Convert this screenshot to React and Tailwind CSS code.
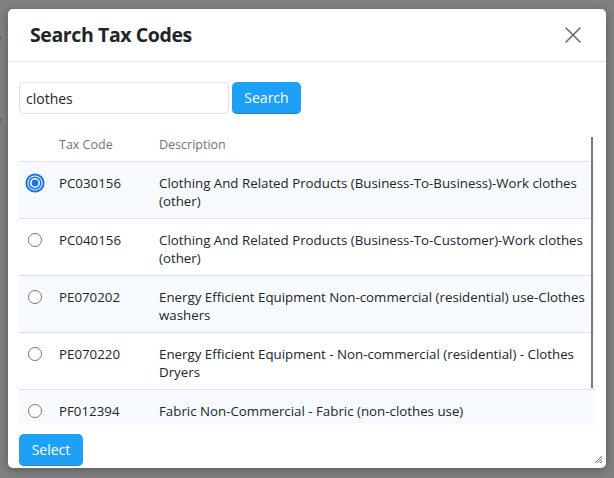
import { useState } from "react";

const rows = [
  { code: "PC030156", desc: "Clothing And Related Products (Business-To-Business)-Work clothes (other)" },
  { code: "PC040156", desc: "Clothing And Related Products (Business-To-Customer)-Work clothes (other)" },
  { code: "PE070202", desc: "Energy Efficient Equipment Non-commercial (residential) use-Clothes washers" },
  { code: "PE070220", desc: "Energy Efficient Equipment - Non-commercial (residential) - Clothes Dryers" },
  { code: "PF012394", desc: "Fabric Non-Commercial - Fabric (non-clothes use)" },
];

function Radio({ checked }) {
  return checked ? (
    <svg width="20" height="20" viewBox="0 0 20 20">
      <circle cx="10" cy="10" r="8.6" fill="none" stroke="#1a73e8" strokeWidth="2" />
      <circle cx="10" cy="10" r="5.8" fill="none" stroke="#1a73e8" strokeWidth="1.6" />
      <circle cx="10" cy="10" r="3.4" fill="#1a73e8" />
    </svg>
  ) : (
    <svg width="20" height="20" viewBox="0 0 20 20">
      <circle cx="10" cy="10" r="6.5" fill="#fff" stroke="#767676" strokeWidth="1" />
    </svg>
  );
}

export default function App() {
  const [query, setQuery] = useState("clothes");
  const [selected, setSelected] = useState("PC030156");

  return (
    <div className="relative w-[614px] h-[478px] overflow-hidden bg-[#808080] font-['Open_Sans',sans-serif]">
      {/* page behind the overlay */}
      <div className="absolute left-[-30px] top-[28px] text-[13px] text-[#3a3a3a]">Code</div>
      <div className="absolute left-[-30px] top-[110px] text-[13px] text-[#3a3a3a]">Code</div>

      <div className="absolute left-[8px] top-[9px] w-[598px] h-[459px] bg-white rounded-[5px] shadow-[0_2px_8px_rgba(0,0,0,0.3)] flex flex-col">
        <div className="h-[53px] shrink-0 flex items-center justify-between pl-[22px] pr-[24px] border-b border-[#dee2e6]">
          <h2 className="text-[19.5px] font-bold text-[#212529] tracking-[-0.4px]">Search Tax Codes</h2>
          <button className="text-[#6c6c6c]">
            <svg width="18" height="18" viewBox="0 0 18 18" stroke="currentColor" strokeWidth="1.6" strokeLinecap="round">
              <line x1="2" y1="2" x2="16" y2="16" />
              <line x1="16" y1="2" x2="2" y2="16" />
            </svg>
          </button>
        </div>

        <div className="flex-1 flex flex-col px-[11px] pt-5 min-h-0">
          <div className="flex gap-[3px]">
            <input
              value={query}
              onChange={(e) => setQuery(e.target.value)}
              className="w-[210px] h-8 px-[6px] text-[14px] text-[#212529] border border-[#dee2e6] rounded-[5px] outline-none"
            />
            <button className="w-[69px] h-8 bg-[#1ea0f6] border-b border-[#1784d0] rounded-[5px] text-white text-[14px]">Search</button>
          </div>

          <div className="relative mt-[15px] h-[296px] shrink-0 overflow-hidden text-[13.3px] leading-[18px] text-[#212529]">
            <div className="grid grid-cols-[32px_100px_1fr] h-[33px] items-center border-b border-[#dee2e6] text-[#6c757d] text-[12.5px]">
              <div />
              <div className="px-2">Tax Code</div>
              <div className="px-2">Description</div>
            </div>
            {rows.map((r, i) => (
              <div
                key={r.code}
                onClick={() => setSelected(r.code)}
                className={`grid grid-cols-[32px_100px_1fr] pt-3 pb-2 border-b border-[#dee2e6] ${i % 2 === 0 ? "bg-[#f7fbff]" : "bg-white"}`}
              >
                <div className="flex justify-center -mt-[1px]">
                  <Radio checked={selected === r.code} />
                </div>
                <div className="px-2 min-h-9">{r.code}</div>
                <div className="pl-2 pr-[8px]">{r.desc}</div>
              </div>
            ))}
            <div className="absolute right-[2px] top-[8px] w-[2px] h-[251px] bg-[#7a7a7a]" />
          </div>

          <div className="mt-[9px]">
            <button className="w-16 h-8 bg-[#1ea0f6] border-b border-[#1784d0] rounded-[5px] text-white text-[14px]">Select</button>
          </div>
        </div>

        <svg className="absolute right-[4px] bottom-[5px]" width="8" height="8" viewBox="0 0 8 8" stroke="#444" strokeWidth="0.8">
          <line x1="8" y1="1" x2="1" y2="8" />
          <line x1="8" y1="3.5" x2="3.5" y2="8" />
          <line x1="8" y1="6" x2="6" y2="8" />
        </svg>
      </div>
    </div>
  );
}
